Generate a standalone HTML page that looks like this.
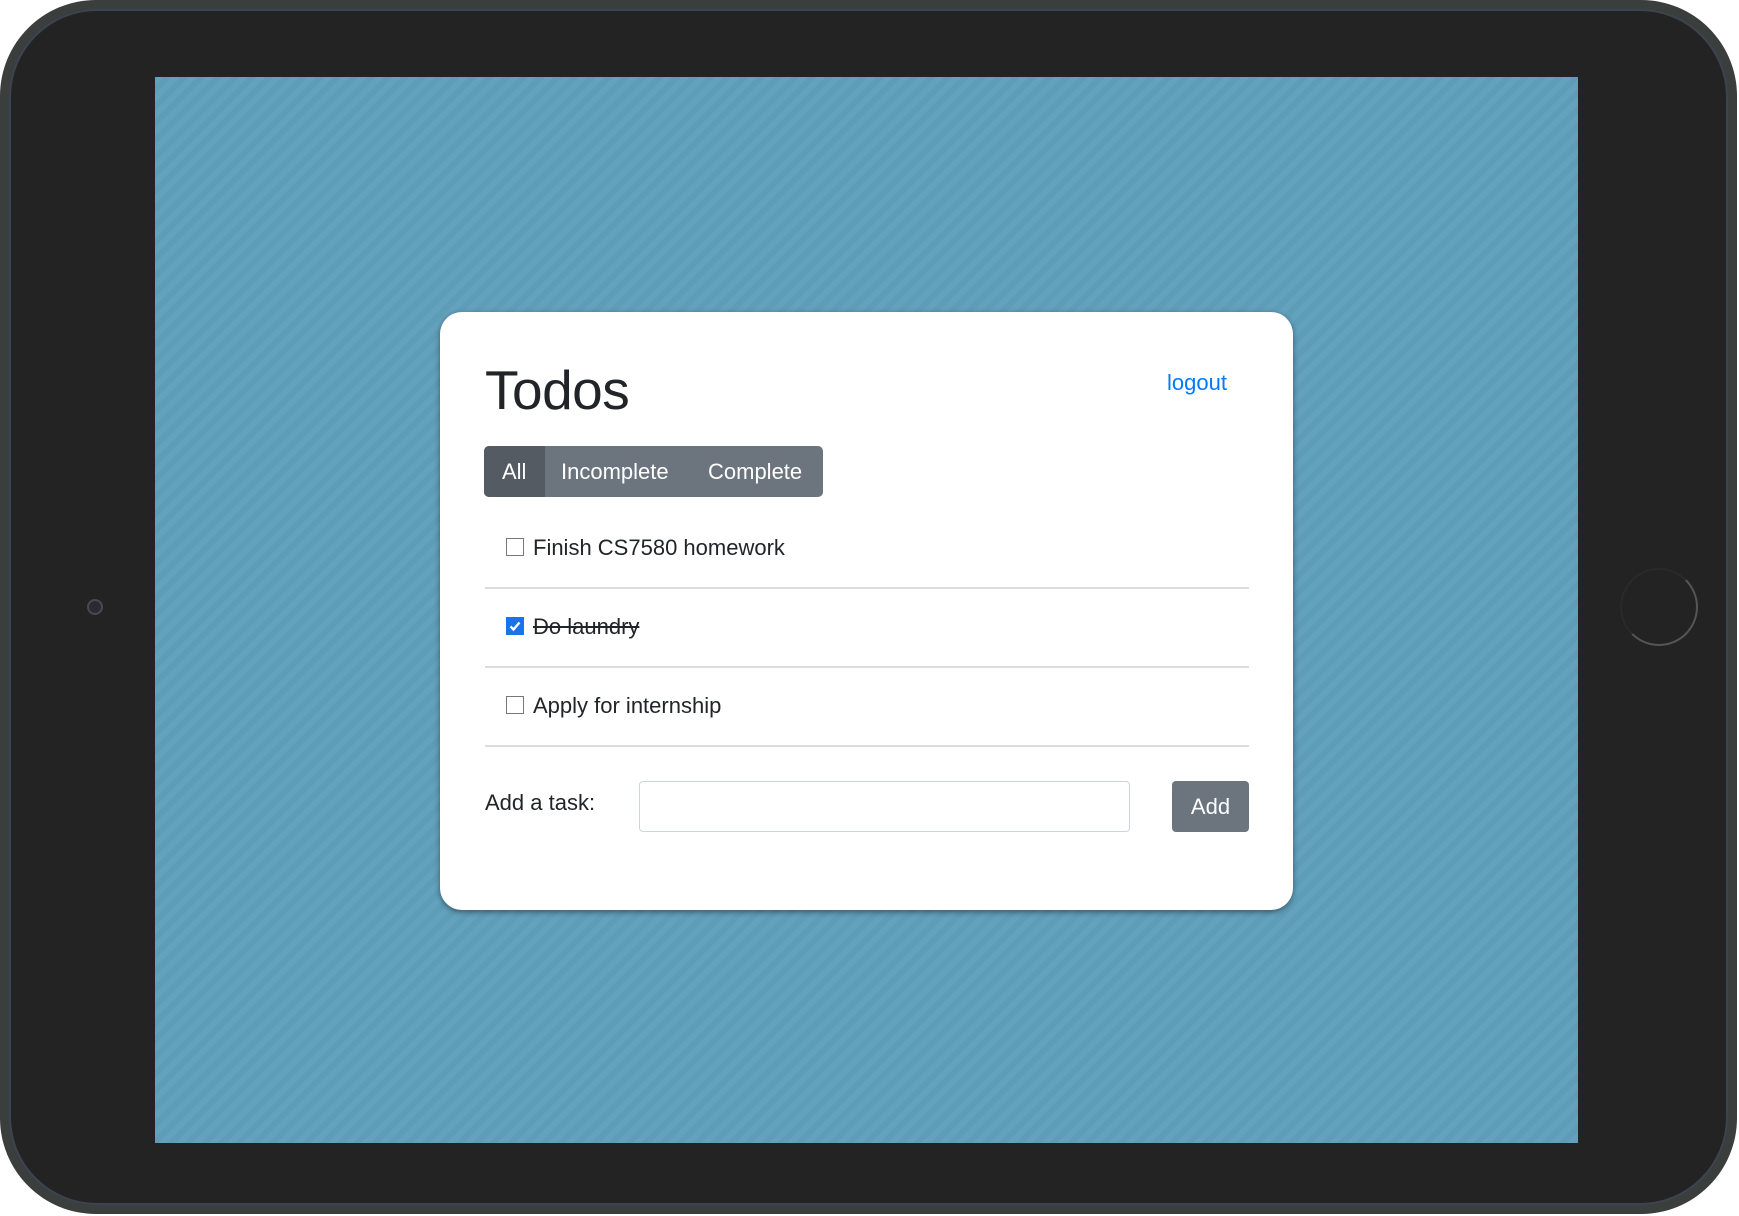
<!DOCTYPE html>
<html><head><style>
html,body{margin:0;padding:0;width:1739px;height:1216px;background:#fff;overflow:hidden;font-family:"Liberation Sans",sans-serif}
.dev{position:absolute;left:0;top:0;width:1737px;height:1214px;border-radius:96px;background:#3a3e3c}
.bz{position:absolute;left:11px;top:11px;right:11px;bottom:11px;border-radius:86px;background:#232323;box-shadow:0 0 0 2px #3d4350}
.scr{position:absolute;left:155px;top:77px;width:1423px;height:1066px;background:#5f9fbb;background-image:repeating-linear-gradient(135deg,rgba(255,255,255,0.025) 0 6px,rgba(0,0,0,0.015) 6px 12px)}
.home{position:absolute;left:1620px;top:568px;width:74px;height:74px;border-radius:50%;border:2px solid #555;border-left-color:#2a2a2a;border-top-color:#2a2a2a}
.cam{position:absolute;left:87px;top:599px;width:12px;height:12px;border-radius:50%;background:#2a2a35;border:2px solid #4a4a4a}
.card{position:absolute;left:440px;top:312px;width:853px;height:598px;background:#fff;border-radius:22px;box-shadow:0 2px 6px rgba(0,0,0,.45)}
h1{position:absolute;left:45px;top:46px;margin:0;font-size:55px;font-weight:500;color:#212529;letter-spacing:-0.5px}
.lo{position:absolute;left:727px;top:58px;font-size:22px;color:#007bff}
.bg{position:absolute;left:44px;top:134px;width:339px;height:51px;border-radius:5px;background:#6c757d;overflow:hidden;color:#fff;font-size:22px}
.bg span{position:absolute;top:13px}
.all{position:absolute;left:0;top:0;width:61px;height:51px;background:#545b62}
.row{position:absolute;left:45px;width:764px;border-bottom:2px solid #dcdcdc}
.cb{position:absolute;left:21px;width:16px;height:16px;border:1px solid #777;background:#fff}
.cb.on{background:#1a73e8;border-color:#1a73e8}
.t{position:absolute;left:48px;font-size:22px;color:#212529}
.lab{position:absolute;left:45px;top:478px;font-size:22px;color:#212529}
.inp{position:absolute;left:199px;top:469px;width:489px;height:49px;border:1px solid #ced4da;border-radius:4px}
.add{position:absolute;left:732px;top:469px;width:77px;height:51px;border-radius:4px;background:#6c757d;color:#fff;font-size:22px;text-align:center;line-height:51px}
</style></head><body>
<div class="dev"><div class="bz"></div></div>
<div class="cam"></div>
<div class="home"></div>
<div class="scr"></div>
<div class="card">
<h1>Todos</h1>
<div class="lo">logout</div>
<div class="bg"><div class="all"></div><span style="left:18px">All</span><span style="left:77px">Incomplete</span><span style="left:224px">Complete</span></div>
<div class="row" style="top:198px;height:77px"><div class="cb" style="top:28px"></div><div class="t" style="top:25px">Finish CS7580 homework</div></div>
<div class="row" style="top:277px;height:77px"><div class="cb on" style="top:28px"><svg width="16" height="16" viewBox="0 0 16 16"><path d="M3.5 8.5l3 3 6-7" stroke="#fff" stroke-width="2.4" fill="none"/></svg></div><div class="t" style="top:25px;text-decoration:line-through">Do laundry</div></div>
<div class="row" style="top:356px;height:77px"><div class="cb" style="top:28px"></div><div class="t" style="top:25px">Apply for internship</div></div>
<div class="lab">Add a task:</div>
<div class="inp"></div>
<div class="add">Add</div>
</div>
</body></html>
